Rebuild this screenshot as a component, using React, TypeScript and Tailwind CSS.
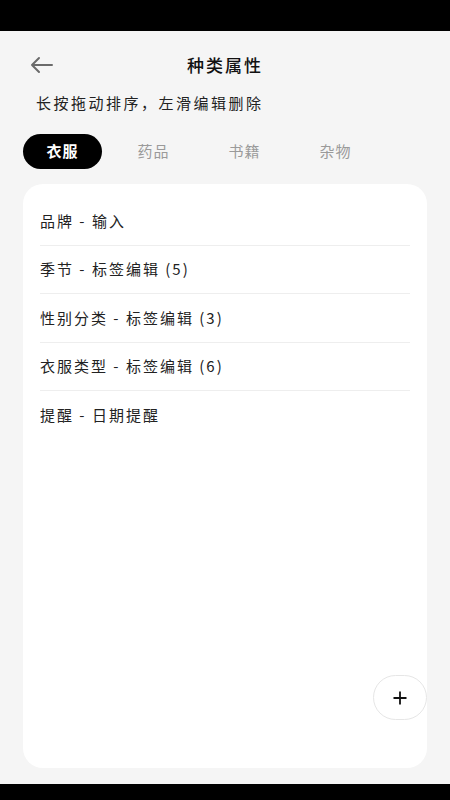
import React from "react";

const items = [
  "品牌 - 输入",
  "季节 - 标签编辑 (5)",
  "性别分类 - 标签编辑 (3)",
  "衣服类型 - 标签编辑 (6)",
  "提醒 - 日期提醒",
];

const tabs = ["衣服", "药品", "书籍", "杂物"];

export default function App() {
  return (
    <div
      className="w-[450px] h-[800px] flex flex-col bg-black"
      style={{ fontFamily: '"Noto Sans CJK SC", "Noto Sans", sans-serif' }}
    >
      <div className="h-[31px] shrink-0 bg-black" />
      <div className="flex-1 flex flex-col bg-[#f5f5f5] pt-[6px]">
        <div className="relative h-[56px] flex items-center justify-center shrink-0">
          <div className="absolute left-[28px] top-1/2 -translate-y-1/2">
            <svg width="26" height="20" viewBox="0 0 26 20" fill="none">
              <path
                d="M24 10H4M11 3L4 10L11 17"
                stroke="#6b6b6b"
                strokeWidth="2"
                strokeLinecap="round"
                strokeLinejoin="round"
              />
            </svg>
          </div>
          <span className="text-[17px] font-medium tracking-[2px] text-[#111]">种类属性</span>
        </div>
        <div className="h-[20px] leading-[20px] pl-[36px] text-[15px] tracking-[2.5px] text-[#222] shrink-0">
          长按拖动排序，左滑编辑删除
        </div>
        <div className="mt-[21px] ml-[23px] flex gap-[12px] h-[35px] shrink-0">
          {tabs.map((t, i) => (
            <div
              key={t}
              className={
                i === 0
                  ? "w-[79px] h-[35px] rounded-full bg-black text-white flex items-center justify-center text-[15px] font-bold tracking-[1px]"
                  : "w-[79px] h-[35px] rounded-full text-[#9a9a9a] flex items-center justify-center text-[15px] tracking-[1px]"
              }
            >
              {t}
            </div>
          ))}
        </div>
        <div className="relative mt-[15px] mx-[23px] mb-[16px] flex-1 bg-white rounded-[20px] px-[17px] pt-[13px]">
          {items.map((t, i) => (
            <div
              key={t}
              className={
                i < items.length - 1
                  ? "h-[48.5px] flex items-center border-b border-[#eeeeee] text-[15px] tracking-[2px] text-[#222]"
                  : "h-[48.5px] flex items-center text-[15px] tracking-[2px] text-[#222]"
              }
            >
              {t}
            </div>
          ))}
          <div className="absolute right-0 bottom-[48px] w-[54px] h-[45px] rounded-full bg-white border border-[#e6e6e6] flex items-center justify-center">
            <svg width="16" height="16" viewBox="0 0 16 16" fill="none">
              <path d="M8 1.5V14.5M1.5 8H14.5" stroke="#111" strokeWidth="1.8" />
            </svg>
          </div>
        </div>
      </div>
      <div className="h-[16px] shrink-0 bg-black" />
    </div>
  );
}
